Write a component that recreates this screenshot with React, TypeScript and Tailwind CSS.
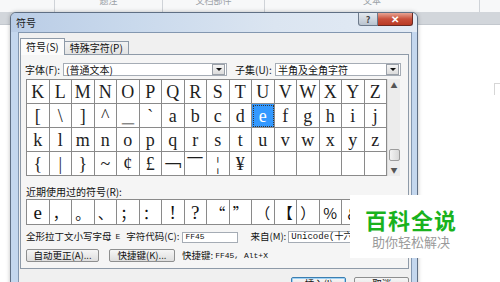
import React from "react";

const row1 = "KLMNOPQRSTUVWXYZ".split("");
const row2 = ["[", "\\", "]", "^", "＿", "`", "a", "b", "c", "d", "e", "f", "g", "h", "i", "j"];
const row3 = "klmnopqrstuvwxyz".split("");
const row4 = ["{", "|", "}", "~", "¢", "£", "￢", "￣", "¦", "¥", "", "", "", "", "", ""];
const recent = ["e", "，", "。", "、", "；", "：", "!", "?", "“", "”", "（", "【", "）", "%", "＆", "＊"];

const Cell = ({ ch, selected }: { ch: string; selected?: boolean }) => (
  <div
    className={`flex items-center justify-center border-r border-b border-[#8a8a8a] leading-none ${
      selected
        ? "bg-[#3399ff] text-white outline-1 outline-dotted -outline-offset-2 outline-[#333]"
        : "text-[#1e1e1e]"
    }`}
  >
    {ch}
  </div>
);

const Combo = ({ text, width }: { text: string; width: string }) => (
  <div className={`flex items-center h-[13px] bg-white border border-[#a5acb5] ${width}`}>
    <span className="flex-1 pl-[2px] leading-none text-[10px] whitespace-nowrap">{text}</span>
    <div className="flex items-center justify-center w-[13px] h-[11px] mr-px border border-[#9aa0a8] bg-[linear-gradient(#f4f4f4,#dcdcdc)]">
      <div className="w-0 h-0 border-l-[3px] border-r-[3px] border-t-[3px] border-l-transparent border-r-transparent border-t-[#111]" />
    </div>
  </div>
);

const Button = ({ label, width, primary }: { label: string; width: string; primary?: boolean }) => (
  <div
    className={`flex items-center justify-center h-[13px] rounded-[2px] border bg-[linear-gradient(#f6f6f6,#dedede)] text-[9.5px] leading-none whitespace-nowrap ${width} ${
      primary ? "border-[#3c7fb1] shadow-[inset_0_0_0_1px_#9fd2f5]" : "border-[#8e8f8f]"
    }`}
  >
    {label}
  </div>
);

const App = () => {
  return (
    <div className="relative w-[500px] h-[282px] overflow-hidden bg-white font-['Noto_Sans_CJK_SC',sans-serif] text-[#111]">
      {/* -------- word ribbon behind the dialog -------- */}
      <div className="flex h-[12px] bg-[#f7f8f9] text-[9px] text-[#9aa0a6] leading-none overflow-hidden">
        <div className="w-[55px] border-r border-[#cfd3d8]" />
        <div className="w-[108px] border-r border-[#cfd3d8] flex justify-center">
          <span className="-mt-[4px]">题注</span>
        </div>
        <div className="w-[102px] border-r border-[#cfd3d8] flex justify-center">
          <span className="-mt-[4px]">文档部件</span>
        </div>
        <div className="w-[215px] border-r border-[#cfd3d8] flex justify-center">
          <span className="-mt-[4px]">文本</span>
        </div>
      </div>
      <div className="h-[13px] bg-[#d2d6db] border-b border-[#c3c8ce]" />

      {/* -------- page corner mark -------- */}
      <div className="absolute left-[494px] top-[83px] w-[10px] h-[12px] border-l border-t border-[#d6d6d6]" />

      {/* -------- symbol dialog -------- */}
      <div className="absolute left-[10px] top-[12px] w-[408px] h-[290px] flex flex-col rounded-t-[6px] border border-[#5f6f84] bg-[#c4d7ee] shadow-[0_0_4px_rgba(0,0,0,0.25)]">
        {/* -------- title bar -------- */}
        <div className="flex h-[19px] rounded-t-[5px] bg-[linear-gradient(to_right,#bacde6,#c9d9ec_30%,#dbe5f1_65%,#e3ebf5)]">
          <span className="pl-[5px] pt-[5px] text-[10px] leading-none text-[#1a1a1a]">符号</span>
          <div className="ml-auto mr-[4px] flex h-[13px]">
            <div className="flex items-center justify-center w-[20px] rounded-bl-[3px] border border-t-0 border-[#6d7a8b] bg-[linear-gradient(#e4e9ef,#b9c3cf)] text-[9px] font-bold text-[#444] leading-none">
              ?
            </div>
            <div className="flex items-center justify-center w-[35px] rounded-br-[3px] border border-t-0 border-l-0 border-[#6b2a22] bg-[linear-gradient(#e8a493,#c8503b_50%,#b93b25)] text-[10px] font-bold text-white leading-none">
              ✕
            </div>
          </div>
        </div>

        {/* -------- body with frame -------- */}
        <div className="flex flex-1 px-[7px]">
          <div className="flex-1 flex flex-col border border-[#8397b0] bg-[#f0f0f0]">
            {/* -------- tabs -------- */}
            <div className="flex items-end h-[21px] pl-[1px] text-[10px] leading-none">
              <div className="relative z-10 flex items-center h-[17px] px-[5px] -mb-px border border-b-0 border-[#8e9aa8] bg-[#fbfbfb]">
                符号(S)
              </div>
              <div className="flex items-center h-[13px] px-[5px] border border-l-0 border-b-0 border-[#8e9aa8] bg-[linear-gradient(#f2f2f2,#e3e3e3)]">
                特殊字符(P)
              </div>
            </div>

            {/* -------- tab panel -------- */}
            <div className="ml-px mr-[2px] h-[215px] flex flex-col border border-[#8e9aa8] bg-[#f5f5f5] pl-[5px] text-[10px] leading-none">
              {/* -------- font / subset -------- */}
              <div className="flex items-center mt-[8px] h-[13px]">
                <span className="w-[38px] -ml-px whitespace-nowrap">字体(F):</span>
                <Combo text="(普通文本)" width="w-[164px]" />
                <span className="ml-[8px] w-[40px] whitespace-nowrap">子集(U):</span>
                <Combo text="半角及全角字符" width="w-[126px]" />
              </div>

              {/* -------- symbol grid -------- */}
              <div className="flex mt-[3px] h-[97px]">
                <div className="grid grid-cols-[repeat(16,minmax(0,1fr))] grid-rows-4 w-[361px] border-l border-t border-[#8a8a8a] bg-white font-['Liberation_Serif',serif] text-[18px]">
                  {row1.map((c, i) => (
                    <Cell key={"a" + i} ch={c} />
                  ))}
                  {row2.map((c, i) => (
                    <Cell key={"b" + i} ch={c} selected={c === "e"} />
                  ))}
                  {row3.map((c, i) => (
                    <Cell key={"c" + i} ch={c} />
                  ))}
                  {row4.map((c, i) => (
                    <Cell key={"d" + i} ch={c} />
                  ))}
                </div>
                {/* -------- scrollbar -------- */}
                <div className="w-[13px] flex flex-col items-center bg-[#ececec] border-l border-[#dcdcdc] text-[7px] text-[#555]">
                  <span className="mt-[3px]">▲</span>
                  <div className="mt-auto w-[11px] h-[12px] rounded-[2px] border border-[#9c9c9c] bg-[linear-gradient(to_right,#f3f3f3,#d8d8d8)]" />
                  <span className="mt-[6px] mb-[2px]">▼</span>
                </div>
              </div>

              {/* -------- recent symbols -------- */}
              <div className="mt-[11px] h-[10px] whitespace-nowrap">近期使用过的符号(R):</div>
              <div className="mt-[2px] grid grid-cols-[repeat(16,minmax(0,1fr))] w-[361px] h-[26px] border-l border-t border-[#8a8a8a] bg-white text-[15px]">
                {recent.map((c, i) => (
                  <div
                    key={"r" + i}
                    className={`flex items-center justify-center border-r border-b border-[#8a8a8a] leading-none ${
                      i === 0 || i === 6 || i === 7 ? "font-['Liberation_Serif',serif] text-[19px]" : "font-['Noto_Sans_CJK_SC',sans-serif]"
                    }`}
                  >
                    {c}
                  </div>
                ))}
              </div>

              {/* -------- character info -------- */}
              <div className="flex items-center mt-[6px] h-[12px] whitespace-nowrap text-[9.5px]">
                <span>全形拉丁文小写字母</span>
                <span className="ml-[4px] font-['Liberation_Mono',monospace] text-[8px]">E</span>
                <span className="ml-[6px]">字符代码(C):</span>
                <div className="ml-[3px] w-[56px] h-[11px] flex items-center pl-[2px] bg-white border border-[#a5acb5] font-['Liberation_Mono',monospace] text-[8px]">
                  FF45
                </div>
                <span className="ml-[12px]">来自(M):</span>
                <div className="ml-[2px] w-[120px] h-[12px] flex items-center pl-[2px] bg-white border border-[#a5acb5] font-['Liberation_Mono','Noto_Sans_CJK_SC',monospace] text-[9px]">
                  Unicode(十六进制)
                </div>
              </div>

              {/* -------- autocorrect / shortcut -------- */}
              <div className="flex items-center mt-[6px] h-[13px] whitespace-nowrap">
                <Button label="自动更正(A)..." width="w-[73px]" />
                <div className="ml-[10px]">
                  <Button label="快捷键(K)..." width="w-[66px]" />
                </div>
                <span className="ml-[7px] text-[9.5px]">快捷键:</span>
                <span className="ml-[2px] font-['Liberation_Mono',monospace] text-[8px]">FF45, Alt+X</span>
              </div>
            </div>

            {/* -------- insert / cancel -------- */}
            <div className="flex justify-end gap-[8px] pr-[2px] mt-[8px] text-[10px]">
              <Button label="插入(I)" width="w-[55px]" primary />
              <Button label="取消" width="w-[55px]" />
            </div>
          </div>
        </div>
      </div>

      {/* -------- watermark -------- */}
      <div className="absolute left-[350px] top-[195px] w-[150px] h-[63px] bg-white pl-[15px] pt-[13px]">
        <div className="text-[22px] leading-none font-bold text-[#19b21d] tracking-[1px]">百科全说</div>
        <div className="mt-[5px] pl-[7px] text-[13px] leading-none text-[#9a9a9a]">助你轻松解决</div>
      </div>
    </div>
  );
};

export default App;
